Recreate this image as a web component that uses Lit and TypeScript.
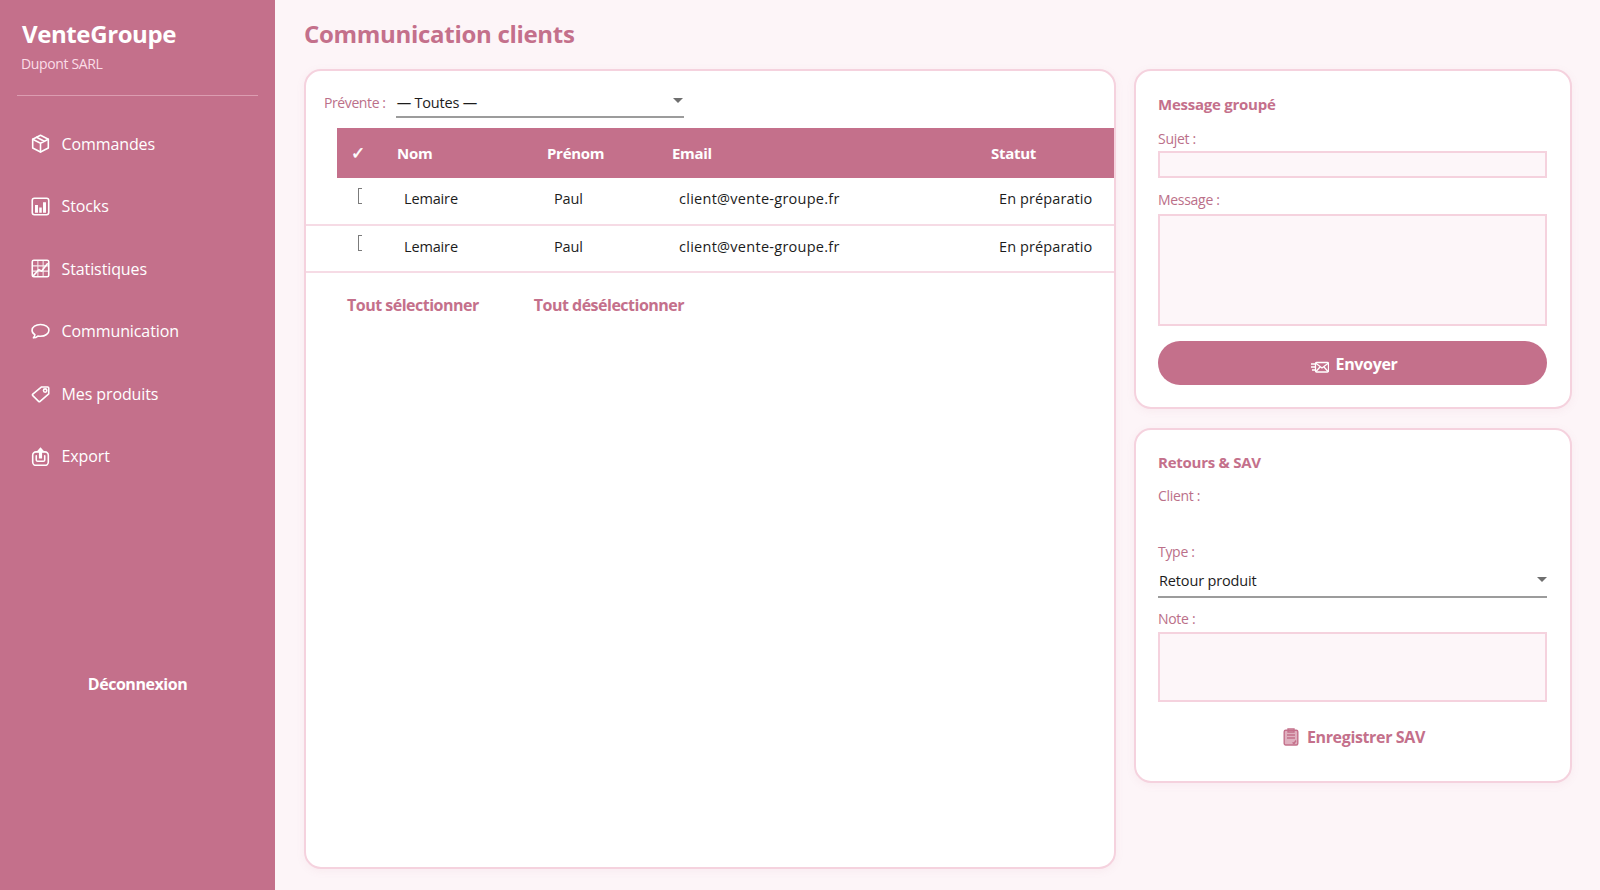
import { LitElement, html, css, svg } from 'lit';
import { customElement } from 'lit/decorators.js';

const NAV_ICONS = {
  box: svg`<path d="M9 1.2 16.4 5v8.2L9 17l-7.4-3.8V5Z"/><path d="M1.6 5 9 8.8 16.4 5M9 8.8V17M5.2 3.1l7.4 3.8"/>`,
  bars: svg`<rect x="1.2" y="1.2" width="15.6" height="15.6" rx="2"/><path class="fill" d="M3.8 7.5h2.8V15H3.8ZM7.8 10h2.4v5H7.8ZM11.4 5h2.8v10h-2.8Z"/>`,
  grid: svg`<rect x="1.2" y="1.2" width="15.6" height="15.6" rx="1.5"/><path class="thin" d="M1.5 6.5h15M1.5 11.5h15M6.5 1.5v15M11.5 1.5v15"/><path d="M2.5 15.5 7.5 10l2.5 1.5 5.5-7"/>`,
  chat: svg`<path d="M9 2.4c-4.5 0-8 2.4-8 5.5 0 1.7 1 3.2 2.7 4.2-.1 1-.6 2-1.4 2.9 1.6-.1 3.1-.8 4.2-1.7.8.1 1.6.2 2.5.2 4.5 0 8-2.5 8-5.6S13.5 2.4 9 2.4Z"/>`,
  tag: svg`<path d="M10 2.8h5.8a1 1 0 0 1 1 1v5.6L8.6 16.4a1 1 0 0 1-1.4 0L1.7 11a1 1 0 0 1 0-1.4Z"/><circle cx="13.4" cy="6.2" r="1.6"/>`,
  export: svg`<rect x="1.6" y="4.6" width="14.8" height="12.8" rx="3.2"/><path d="M5 8.4v3.8c0 .8.5 1.3 1.3 1.3h5.4c.8 0 1.3-.5 1.3-1.3V8.4"/><path class="fill" d="M9 .2 13.2 5h-2.7v5.8h-3V5H4.8Z"/>`,
};

const NAV = [
  ['Commandes', NAV_ICONS.box],
  ['Stocks', NAV_ICONS.bars],
  ['Statistiques', NAV_ICONS.grid],
  ['Communication', NAV_ICONS.chat],
  ['Mes produits', NAV_ICONS.tag],
  ['Export', NAV_ICONS.export],
] as const;

const CLIENTS = [
  { nom: 'Lemaire', prenom: 'Paul', email: 'client@vente-groupe.fr', statut: 'En préparatio' },
  { nom: 'Lemaire', prenom: 'Paul', email: 'client@vente-groupe.fr', statut: 'En préparatio' },
];

@customElement('app-root')
export class AppRoot extends LitElement {
  static styles = css`
    :host {
      display: flex;
      width: 100%;
      height: 100vh;
      background: #fdf5f8;
      font-family: 'Open Sans', 'Noto Sans', sans-serif;
      font-size: 14.5px;
      color: #1c1c1c;
      overflow: hidden;
    }

    /* Sidebar */
    .sidebar {
      flex: 0 0 275px;
      display: flex;
      flex-direction: column;
      background: #c4708b;
      color: #fff;
      padding-top: 19.5px;
      box-sizing: border-box;
    }
    .brand {
      padding-left: 22px;
      font-size: 24px;
      line-height: 28px;
      font-weight: 700;
      letter-spacing: -0.4px;
    }
    .company {
      padding-left: 21px;
      margin-top: 5.5px;
      font-size: 14px;
      line-height: 22px;
      letter-spacing: -0.35px;
      color: #fbdde7;
    }
    .divider {
      height: 1px;
      margin: 20px 17px 16.5px;
      background: #dc9db1;
    }
    .nav-item {
      display: flex;
      align-items: center;
      gap: 11.5px;
      height: 62.5px;
      padding-left: 31px;
      font-size: 16px;
      letter-spacing: -0.1px;
    }
    .nav-item svg {
      width: 19px;
      height: 19px;
      fill: none;
      stroke: #fff;
      stroke-width: 1.5;
      stroke-linejoin: round;
      stroke-linecap: round;
    }
    .nav-item svg .fill {
      fill: #fff;
      stroke: none;
    }
    .nav-item svg .thin {
      stroke-width: 1;
      opacity: 0.85;
    }
    .logout {
      margin-top: 185.5px;
      text-align: center;
      font-size: 16px;
      font-weight: 700;
      letter-spacing: -0.45px;
    }

    /* Main */
    .main {
      flex: 1;
      min-width: 0;
      padding: 19.5px 0 21px 29px;
      display: flex;
      flex-direction: column;
      gap: 21.5px;
    }
    h1 {
      margin: 0;
      font-size: 24px;
      line-height: 28px;
      font-weight: 700;
      letter-spacing: -0.3px;
      color: #c4708b;
    }
    .columns {
      flex: 1;
      min-height: 0;
      display: grid;
      grid-template-columns: 812px 438px;
      gap: 18px;
    }
    .card {
      box-sizing: border-box;
      background: #fff;
      border: 2px solid #f5d2de;
      border-radius: 17px;
      box-shadow: 0 2px 8px rgba(196, 112, 139, 0.08);
    }

    /* Table card */
    .clients {
      display: flex;
      flex-direction: column;
    }
    .filter {
      display: flex;
      align-items: center;
      gap: 10px;
      height: 57px;
      padding-left: 18px;
      box-sizing: border-box;
    }
    .filter label {
      font-size: 14px;
      letter-spacing: -0.4px;
      color: #bb6f89;
      margin-top: 6px;
    }
    .select {
      position: relative;
      display: flex;
      align-items: center;
      box-sizing: border-box;
      height: 28px;
      border-bottom: 2px solid #9c9c9c;
      font-size: 14.5px;
      letter-spacing: -0.2px;
      padding-left: 1px;
    }
    .filter .select {
      width: 288px;
      margin-top: 9px;
      padding-bottom: 1px;
    }
    .select::after {
      content: '';
      position: absolute;
      right: 1px;
      top: 8px;
      border-left: 5px solid transparent;
      border-right: 5px solid transparent;
      border-top: 5px solid #6f6f6f;
    }
    .row {
      display: grid;
      grid-template-columns: 32px 59px 150px 125px 319px 1fr;
      align-items: center;
      box-sizing: border-box;
      height: 47.5px;
      border-bottom: 2px solid #f6dbe5;
      overflow: hidden;
    }
    .row.head {
      height: 50px;
      border-bottom: none;
      background: linear-gradient(to right, transparent 31px, #c4708b 31px);
      color: #fff;
      font-weight: 700;
      font-size: 15px;
      letter-spacing: -0.3px;
    }
    .row.head .tick {
      grid-column: 2;
      padding-left: 13px;
      font-family: 'DejaVu Sans', sans-serif;
      font-size: 17px;
      font-weight: 700;
      -webkit-text-stroke: 0.5px #fff;
    }
    .row.head .col-nom {
      grid-column: 3;
    }
    .row .pad {
      padding-left: 7px;
      white-space: nowrap;
    }
    .row.body {
      letter-spacing: -0.15px;
      font-size: 14.5px;
      padding-bottom: 4px;
    }
    .row.body .nom {
      grid-column: 3;
    }
    .row.body .email {
      letter-spacing: 0.27px;
    }
    .row.body .statut {
      padding-left: 8px;
      letter-spacing: 0.1px;
    }
    .bracket {
      grid-column: 2;
      width: 3px;
      height: 14px;
      margin: -6px 0 0 20px;
      border: 1px solid #7b7b7b;
      border-right: none;
    }
    .actions {
      display: flex;
      gap: 55px;
      padding: 21px 0 0 41px;
      font-size: 16px;
      font-weight: 700;
      letter-spacing: -0.5px;
      color: #c4708b;
    }

    /* Right column */
    .side {
      display: flex;
      flex-direction: column;
      gap: 19px;
    }
    .panel {
      display: flex;
      flex-direction: column;
      padding: 22px 23px 0 22px;
    }
    .panel.message {
      height: 340px;
    }
    .panel.sav {
      height: 355px;
      padding-top: 21px;
    }
    h2 {
      margin: 0;
      font-size: 15px;
      line-height: 22px;
      font-weight: 700;
      letter-spacing: -0.25px;
      color: #c4708b;
    }
    .panel label {
      display: block;
      font-size: 14px;
      line-height: 20px;
      letter-spacing: -0.3px;
      color: #bb6f89;
    }
    .field {
      box-sizing: border-box;
      display: block;
      width: 100%;
      background: #fdf6f9;
      border: 2px solid #f5d2de;
      border-radius: 0;
      margin: 0;
      padding: 0;
      outline: none;
      resize: none;
    }
    .send {
      display: flex;
      align-items: center;
      justify-content: center;
      gap: 7px;
      box-sizing: border-box;
      height: 44px;
      margin-top: 15px;
      padding: 2px 0 0 3px;
      border-radius: 22px;
      background: #c4708b;
      color: #fff;
      font-size: 16px;
      font-weight: 700;
      letter-spacing: -0.35px;
    }
    .send svg {
      width: 18px;
      height: 12px;
      margin-top: 5px;
      fill: none;
      stroke: #fff;
      stroke-width: 1.3;
    }
    .panel .select {
      width: 100%;
      height: 27px;
      padding-bottom: 6px;
      font-size: 14.5px;
      letter-spacing: -0.15px;
    }
    .panel .select::after {
      top: 6px;
      right: 0;
    }
    .save {
      display: flex;
      align-items: center;
      justify-content: center;
      gap: 8px;
      margin-top: 24px;
      padding-left: 3px;
      font-size: 16px;
      font-weight: 700;
      letter-spacing: -0.35px;
      color: #c4708b;
    }
    .save svg {
      width: 16px;
      height: 18px;
      fill: rgba(196, 112, 139, 0.55);
      stroke: #c4708b;
      stroke-width: 1.4;
    }
  `;

  render() {
    return html`
      <aside class="sidebar">
        <div class="brand">VenteGroupe</div>
        <div class="company">Dupont SARL</div>
        <div class="divider"></div>
        <nav>
          ${NAV.map(
            ([label, icon]) => html`
              <div class="nav-item">
                <svg viewBox="0 0 18 18">${icon}</svg>
                <span>${label}</span>
              </div>
            `,
          )}
        </nav>
        <div class="logout">Déconnexion</div>
      </aside>

      <main class="main">
        <h1>Communication clients</h1>
        <div class="columns">
          <section class="card clients">
            <div class="filter">
              <label>Prévente :</label>
              <div class="select">— Toutes —</div>
            </div>
            <div class="row head">
              <span class="tick">✓</span>
              <span class="col-nom">Nom</span>
              <span>Prénom</span>
              <span>Email</span>
              <span>Statut</span>
            </div>
            ${CLIENTS.map(
              (c) => html`
                <div class="row body">
                  <span class="bracket"></span>
                  <span class="nom pad">${c.nom}</span>
                  <span class="pad">${c.prenom}</span>
                  <span class="pad email">${c.email}</span>
                  <span class="pad statut">${c.statut}</span>
                </div>
              `,
            )}
            <div class="actions">
              <span>Tout sélectionner</span>
              <span>Tout désélectionner</span>
            </div>
          </section>

          <div class="side">
            <section class="card panel message">
              <h2>Message groupé</h2>
              <label style="margin-top:14px">Sujet :</label>
              <input class="field" style="height:27px;margin-top:2px" />
              <label style="margin-top:11.5px">Message :</label>
              <textarea class="field" style="height:112px;margin-top:4.5px"></textarea>
              <div class="send">
                <svg viewBox="0 0 18 12">
                  <rect x="4.5" y="1.5" width="13" height="9.5" rx="1"></rect>
                  <path d="M4.5 2l6.5 5 6.5-5M5 10.5l4-4.5M17 10.5l-4-4.5M0 3h4M0 6h4M1 9h3"></path>
                </svg>
                <span>Envoyer</span>
              </div>
            </section>

            <section class="card panel sav">
              <h2>Retours &amp; SAV</h2>
              <label style="margin-top:13px">Client :</label>
              <label style="margin-top:35.5px">Type :</label>
              <div class="select" style="margin-top:9px">Retour produit</div>
              <label style="margin-top:11px">Note :</label>
              <textarea class="field" style="height:70px;margin-top:3px"></textarea>
              <div class="save">
                <svg viewBox="0 0 16 18">
                  <rect x="1.2" y="2.2" width="13.6" height="14.8" rx="1.5"></rect>
                  <path d="M5 1h6v3H5ZM4 7h8M4 10h8M9.5 14.5l1.5 1 2-3" fill="none"></path>
                </svg>
                <span>Enregistrer SAV</span>
              </div>
            </section>
          </div>
        </div>
      </main>
    `;
  }
}
